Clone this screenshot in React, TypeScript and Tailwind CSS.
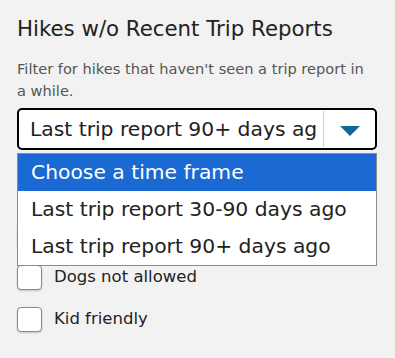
import { useState } from 'react';

const OPTIONS = [
    'Choose a time frame',
    'Last trip report 30-90 days ago',
    'Last trip report 90+ days ago',
];

const CHECKS = ['Has trip reports', 'Dogs not allowed', 'Kid friendly'];

function Checkbox({ label }: { label: string }) {
    const [checked, setChecked] = useState(false);
    return (
        <label className="flex items-center gap-[12px] h-[25px] cursor-pointer">
            <input
                type="checkbox"
                checked={checked}
                onChange={() => setChecked(v => !v)}
                className="appearance-none w-[25px] h-[25px] shrink-0 rounded-[4px] border border-[#8a8a8a] bg-white shadow-[0_1px_2px_rgba(0,0,0,0.2)]"
            />
            <span className="text-[16.5px] text-[#222]">{label}</span>
        </label>
    );
}

export default function App() {
    const [value] = useState(2);
    return (
        <div
            className="min-h-screen bg-[#f2f2f2] px-[17px] pt-[14px]"
            style={{ fontFamily: '"DejaVu Sans", "Liberation Sans", sans-serif' }}
        >
            <h2 className="text-[21.3px] leading-[30px] text-[#222]">Hikes w/o Recent Trip Reports</h2>
            <p className="mt-[14px] max-w-[355px] text-[14.6px] leading-[22px] text-[#555]">
                Filter for hikes that haven't seen a trip report in a while.
            </p>

            <div className="relative mt-[6px] w-[360px]">
                <div className="flex h-[42px] rounded-[5px] border-2 border-black bg-white">
                    <div className="min-w-0 flex-1 pl-[11px] pr-[7px]">
                        <div className="overflow-hidden whitespace-nowrap text-[20.3px] leading-[38px] text-[#222]">
                            {OPTIONS[value]}
                        </div>
                    </div>
                    <div className="my-[1px] flex w-[52px] shrink-0 items-center justify-center border-l border-[#cfcfcf]">
                        <svg width="20" height="10" viewBox="0 0 20 10" className="mt-[3px]">
                            <path d="M0 0 L20 0 L10 10 Z" fill="#0e6a96" />
                        </svg>
                    </div>
                </div>

                <ul className="absolute left-0 top-[45px] z-10 w-[360px] border border-[#8c8c8c] bg-white">
                    {OPTIONS.map((o, i) => (
                        <li
                            key={o}
                            className={
                                i === 0
                                    ? 'h-[37px] pl-[13px] text-[20.3px] leading-[37px] bg-[#1b69d3] text-white'
                                    : 'h-[37px] pl-[13px] text-[20.3px] leading-[37px] text-[#222]'
                            }
                        >
                            {o}
                        </li>
                    ))}
                </ul>
            </div>

            <div className="mt-[73px] flex flex-col gap-[17px]">
                {CHECKS.map(c => (
                    <Checkbox key={c} label={c} />
                ))}
            </div>
        </div>
    );
}
